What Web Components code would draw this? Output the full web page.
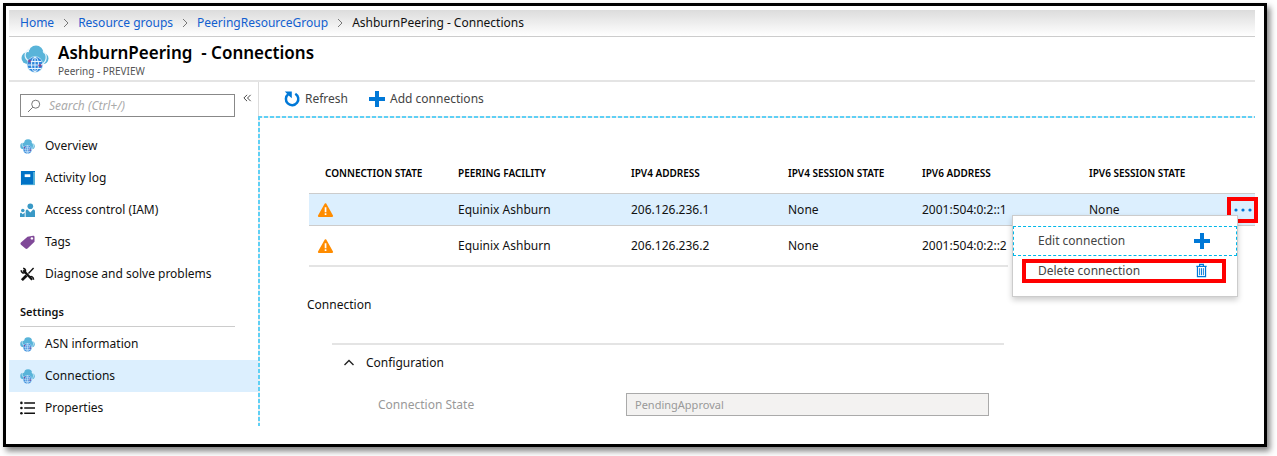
<!DOCTYPE html>
<html lang="en">
<head>
<meta charset="utf-8">
<title>AshburnPeering - Connections</title>
<style>
  body { margin: 0; padding: 3px 10px 10px 3px; background: #fff; font: 12px/16px "Noto Sans", "Open Sans", sans-serif; color: #111; }
</style>
</head>
<body>
<portal-frame>
  <bread-crumbs slot="top"></bread-crumbs>
  <blade-header slot="top" heading="AshburnPeering &nbsp;- Connections" sub="Peering - PREVIEW"></blade-header>
  <side-nav slot="side"></side-nav>
  <command-bar></command-bar>
  <connection-table></connection-table>
  <connection-details></connection-details>
</portal-frame>

<script>
const icons = {
  globe: '<svg viewBox="0 0 28 28"><g fill="#59b4d9"><circle cx="15" cy="8" r="7.500"/><circle cx="6.500" cy="13" r="6"/><circle cx="22" cy="13.500" r="5.500"/><path d="M6 12h17v7H6z"/></g><circle cx="14" cy="19.500" r="8.200" fill="#bfe2f3"/><circle cx="14" cy="19.500" r="7.500" fill="#2f86dc"/><g fill="none" stroke="#e8f5fd"><ellipse cx="14" cy="19.500" rx="3.500" ry="7.300"/><path d="M7.500 16.500h13M6.500 20h15M8 23.500h12M14 12v15"/></g><path d="M8 16C2.500 13 3 7 8.500 4M20 20c6-3 7-10 2-14" fill="none" stroke="#e8f5fd" stroke-width="1.200"/><circle cx="8.500" cy="16" r="1.500" fill="#804998"/><circle cx="19" cy="20.500" r="1.600" fill="#804998"/></svg>',
  log: '<svg viewBox="0 0 16 16"><path d="M1 0h15v15H1z" fill="#0072c6"/><path d="M14 1h2v14H2v-1h12z" fill="#59b4d9"/><path d="M5 3.500h6v3H5z" fill="#fff"/></svg>',
  people: '<svg viewBox="0 0 16 16" fill="#3999c6"><circle cx="11" cy="3.500" r="3"/><path d="M6 15V9c0-1.400.8-2 2-2l3 3 3-3c1.200 0 2 .6 2 2v6z"/><circle cx="3" cy="8" r="1.900"/><path d="M0 15v-3c0-1 .6-1.500 1.400-1.500L3 12l1.600-1.500H5V15z"/></svg>',
  tag: '<svg viewBox="0 0 16 16"><path d="M8 1.800 14 .8c.9 0 1.500.5 1.500 1.400v5L8 14.500c-.7.7-1.500.7-2.200 0L1 10.300c-.7-.7-.7-1.500 0-2.200z" fill="#804998"/><circle cx="12.700" cy="3.600" r="1.300" fill="#fff"/></svg>',
  tools: '<svg viewBox="0 0 16 16" fill="none" stroke="#111"><path d="M3.500 3.500l9.500 10" stroke-width="2.400"/><path d="M1.300 3.400c0 3 2.500 3.600 4 2.400C6.500 4.200 6 2 3.400 1.300" stroke-width="1.700"/><path d="M14.500 1 9 7" stroke-width="1.500"/><path d="M7 9l-5 5" stroke-width="3"/><path d="M10.500 10.500c2-1 4 .5 4 3" stroke-width="1.500"/></svg>',
  list: '<svg viewBox="0 0 16 16" fill="#111"><circle cx="1.500" cy="2" r="1.400"/><circle cx="1.500" cy="7.500" r="1.400"/><circle cx="1.500" cy="13" r="1.400"/><path d="M4.500 1.200H16v1.600H4.500zM4.500 6.700H16v1.600H4.500zM4.500 12.200H16v1.600H4.500z"/></svg>',
  plus: '<svg viewBox="0 0 16 16"><path d="M6 0h4v6h6v4h-6v6H6v-6H0V6h6z" fill="#0078d7"/></svg>',
  refresh: '<svg viewBox="0 0 16 16"><path d="M11.300 2.700A6.200 6.200 0 1 1 4.200 3.200" fill="none" stroke="#0078d7" stroke-width="2.500"/><path d="M.8.600h7v6.600L5.500 5.300 3 2.800z" fill="#0078d7"/></svg>',
  trash: '<svg viewBox="0 0 16 16" fill="none" stroke="#0078d7"><path d="M2.500 3.500h11M6 3V1.500h4V3M3.700 4v10.500h8.600V4" stroke-width="1.300"/><path d="M6 5.500v7.500M8 5.500v7.500M10 5.500v7.500"/></svg>',
  warn: '<svg viewBox="0 0 16 16"><path d="M8 2.200 14.600 14H1.400z" fill="#ff8c00" stroke="#ff8c00" stroke-width="2" stroke-linejoin="round"/><path d="M7.200 5.200h1.700v5H7.200zM7.200 11.300h1.700V13H7.200z" fill="#fff"/></svg>',
  dots: '<svg viewBox="0 0 18 4" fill="#0078d7"><circle cx="2" cy="2" r="1.600"/><circle cx="9" cy="2" r="1.600"/><circle cx="16" cy="2" r="1.600"/></svg>',
  search: '<svg viewBox="0 0 14 14" fill="none" stroke="#777"><circle cx="8.700" cy="5.200" r="4"/><path d="M5.800 8.200 1 13"/></svg>',
  right: '<svg viewBox="0 0 8 10" fill="none" stroke="#777"><path d="M2 1l4 4-4 4"/></svg>',
  up: '<svg viewBox="0 0 12 8" fill="none" stroke="#222" stroke-width="1.400"><path d="M1.500 6 6 1.500l4.500 4.500"/></svg>',
  fold: '<svg viewBox="0 0 10 8" fill="none" stroke="#333"><path d="M4.500.5 1 4l3.500 3.500M8.500.5 5 4l3.500 3.500"/></svg>'
};

const base = ':host,*{box-sizing:border-box}svg{display:block;flex:none;overflow:visible}button{font:inherit;color:inherit;background:none;border:0;padding:0;margin:0;cursor:pointer}a{text-decoration:none}';

class Part extends HTMLElement {
  connectedCallback() {
    if (this.shadowRoot) return;
    const t = document.createElement('template');
    t.innerHTML = `<style>${base}${this.css()}</style>${this.html()}`;
    this.attachShadow({ mode: 'open' }).append(t.content.cloneNode(true));
  }
}

customElements.define('portal-frame', class extends Part {
  css() { return `
    :host{display:block;border:3px solid #000;padding:4px 9px 18px 3px;background:#fff;box-shadow:3px 4px 6px rgba(0,0,0,.5)}
    .body{display:grid;grid-template-columns:249px minmax(0,1fr)}
    main{display:flex;flex-direction:column}`; }
  html() { return `<slot name="top"></slot><div class="body"><slot name="side"></slot><main><slot></slot></main></div>`; }
});

customElements.define('bread-crumbs', class extends Part {
  css() { return `
    :host{display:block;border-bottom:1px solid #ccc;background:linear-gradient(#dcdcdc,#fff)}
    nav{display:flex;align-items:center;gap:8px;height:26px;padding-left:11px}
    a{color:#1160d0} svg{width:8px;height:10px}`; }
  html() { return `<nav aria-label="Breadcrumb"><a href="#">Home</a>${icons.right}<a href="#">Resource groups</a>${icons.right}<a href="#">PeeringResourceGroup</a>${icons.right}<span>AshburnPeering - Connections</span></nav>`; }
});

customElements.define('blade-header', class extends Part {
  css() { return `
    :host{display:flex;align-items:center;gap:9px;height:45px;padding-left:12px;border-bottom:2px solid #e4e4e4}
    svg{width:28px;height:28px}
    h1{margin:0;font-size:17px;line-height:24px;font-weight:600;color:#000}
    p{margin:0;font-size:10px;line-height:12px;color:#555}`; }
  html() { return `${icons.globe}<div><h1>${this.getAttribute('heading')}</h1><p>${this.getAttribute('sub')}</p></div>`; }
});

customElements.define('nav-item', class extends Part {
  css() { return `
    :host{display:block}
    :host([active]) a{background:#dceffe}
    a{display:flex;align-items:center;gap:10px;height:32px;padding-left:11px;color:#111}
    svg{width:15px;height:15px}`; }
  html() { return `<a href="#">${icons[this.getAttribute('icon')]}<slot></slot></a>`; }
});

customElements.define('side-nav', class extends Part {
  css() { return `
    :host{display:block;padding-top:12px}
    .find{display:flex;align-items:flex-start;gap:8px;padding-left:11px;margin-bottom:13px}
    label{display:flex;align-items:center;gap:8px;width:215px;height:23px;border:1px solid #888;padding-left:6px}
    label svg{width:14px;height:14px}
    input{flex:1;min-width:0;border:0;outline:0;padding:0;background:none;font:italic 12px/16px "Noto Sans",sans-serif}
    input::placeholder{color:#aaa;opacity:1}
    .find button svg{width:9px;height:8px}
    h2{margin:8px 23px 1px 11px;padding:6px 0;border-bottom:1px solid #ccc;font-size:11px;line-height:16px;font-weight:600}`; }
  html() { return `
    <div class="find"><label>${icons.search}<input type="search" aria-label="Search" placeholder="Search (Ctrl+/)"></label><button aria-label="Collapse menu">${icons.fold}</button></div>
    <nav>
      <nav-item icon="globe">Overview</nav-item>
      <nav-item icon="log">Activity log</nav-item>
      <nav-item icon="people">Access control (IAM)</nav-item>
      <nav-item icon="tag">Tags</nav-item>
      <nav-item icon="tools">Diagnose and solve problems</nav-item>
      <h2>Settings</h2>
      <nav-item icon="globe">ASN information</nav-item>
      <nav-item icon="globe" active>Connections</nav-item>
      <nav-item icon="list">Properties</nav-item>
    </nav>`; }
});

customElements.define('command-bar', class extends Part {
  css() { return `
    :host{display:flex;align-items:center;gap:21px;height:34px;padding-left:25px;border-left:1px solid #ddd;color:#444}
    button{display:flex;align-items:center;gap:5px}
    svg{width:16px;height:16px}`; }
  html() { return `<button>${icons.refresh}Refresh</button><button>${icons.plus}Add connections</button>`; }
});

customElements.define('row-menu', class extends Part {
  css() { return `
    :host{display:block;position:relative}
    .more{display:flex;align-items:center;justify-content:center;width:31px;height:26px;border:4px solid #f00}
    .more svg{width:18px;height:4px}
    .menu{position:absolute;top:18px;right:17px;z-index:1;width:226px;padding:10px 0 13px;background:#fff;border:1px solid #ccc;box-shadow:0 3px 6px rgba(0,0,0,.2);color:#444}
    .menu button{display:flex;align-items:center;justify-content:space-between}
    .edit{width:100%;height:30px;padding:0 26px 0 24px;border:1px dashed #00b7e8}
    .delete{width:204px;height:24px;margin:3px 0 0 9px;padding:0 13px 0 12px;border:4px solid #f00}
    .menu svg{width:16px;height:16px}
    .menu .delete svg{width:15px;height:15px}`; }
  html() { return `<button class="more" aria-label="More">${icons.dots}</button>
    <div class="menu" role="menu"><button class="edit" role="menuitem">Edit connection${icons.plus}</button><button class="delete" role="menuitem">Delete connection${icons.trash}</button></div>`; }
});

customElements.define('connection-table', class extends Part {
  css() { return `
    :host{display:block;padding:36px 0 0 51px;
      background:repeating-linear-gradient(90deg,#5fd0f5 0 4px,#eee 4px 6px) 0 0/100% 2px no-repeat,
                 repeating-linear-gradient(#5fd0f5 0 4px,#eee 4px 6px) 0 0/2px 100% no-repeat}
    table{width:100%;border-collapse:separate;border-spacing:0;table-layout:fixed}
    th{height:41px;padding:0;text-align:left;font-size:10px;line-height:16px;font-weight:600;color:#000;white-space:nowrap}
    th:first-child{padding-left:16px}
    td{padding:0;white-space:nowrap}
    td:first-child{padding-left:8px}
    td:nth-child(6),th:nth-child(6){padding-left:81px}
    .on td{height:33px;background:#dceffe;border:solid #ccc;border-width:1px 0}
    .off td{height:41px}
    .off td:nth-child(-n+5){border-bottom:2px solid #e4e4e4}
    svg{width:17px;height:16px}`; }
  html() {
    const cells = (n) => `<td>${icons.warn}</td><td>Equinix Ashburn</td><td>206.126.236.${n}</td><td>None</td><td>2001:504:0:2::${n}</td>`;
    return `<table>
      <colgroup><col style="width:149px"><col style="width:173px"><col style="width:157px"><col style="width:134px"><col style="width:86px"><col><col style="width:28px"></colgroup>
      <thead><tr><th>CONNECTION STATE</th><th>PEERING FACILITY</th><th>IPV4 ADDRESS</th><th>IPV4 SESSION STATE</th><th>IPV6 ADDRESS</th><th>IPV6 SESSION STATE</th><th></th></tr></thead>
      <tbody><tr class="on">${cells(1)}<td>None</td><td><row-menu></row-menu></td></tr><tr class="off">${cells(2)}<td></td><td></td></tr></tbody>
    </table>`; }
});

customElements.define('connection-details', class extends Part {
  css() { return `
    :host{display:block;padding:30px 0 10px 49px;background:repeating-linear-gradient(#5fd0f5 0 4px,#eee 4px 6px) 0 0/2px 100% no-repeat}
    h2,h3{margin:0;font-size:12px;line-height:16px;font-weight:400}
    section{margin:30px 251px 0 25px;border-top:2px solid #e4e4e4;padding-top:10px}
    h3 button{display:flex;align-items:center;gap:11px;padding-left:11px}
    h3 svg{width:12px;height:8px}
    .row{display:grid;grid-template-columns:248px 1fr;align-items:center;margin:22px 15px 0 46px;color:#999}
    input{width:100%;height:23px;border:1px solid #aaa;background:#f3f2f1;padding:0 8px;font:11px/16px "Noto Sans",sans-serif;color:#999}`; }
  html() { return `<h2>Connection</h2><section><h3><button aria-expanded="true">${icons.up}Configuration</button></h3>
    <div class="row"><label for="state">Connection State</label><input id="state" value="PendingApproval" disabled></div></section>`; }
});
</script>
</body>
</html>
